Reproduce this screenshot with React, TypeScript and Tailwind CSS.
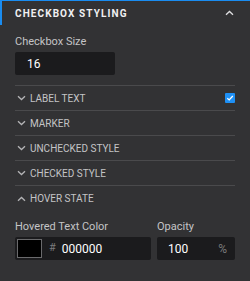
const ChevronDown = () => (
  <svg width="9" height="6" viewBox="0 0 9 6" className="shrink-0">
    <path d="M1 1.2 L4.5 4.5 L8 1.2" fill="none" stroke="#b4b4b6" strokeWidth="1.3" />
  </svg>
);

const ChevronUp = ({ color = "#b4b4b6" }: { color?: string }) => (
  <svg width="9" height="6" viewBox="0 0 9 6" className="shrink-0">
    <path d="M1 4.8 L4.5 1.5 L8 4.8" fill="none" stroke={color} strokeWidth="1.3" />
  </svg>
);

const sections = ["LABEL TEXT", "MARKER", "UNCHECKED STYLE", "CHECKED STYLE"];

export default function App() {
  return (
    <div
      className="w-[250px] h-[281px] bg-[#323234] text-[#d0d0d2] overflow-hidden"
      style={{ fontFamily: 'Roboto, "Noto Sans", sans-serif' }}
    >
      {/* header */}
      <div className="h-[25px] border-t border-l-2 border-[#1a8cf0] flex items-center justify-between pl-[13px] pr-[16px]">
        <span className="text-[10px] font-bold tracking-[1.1px] text-[#f0f0f2]">
          CHECKBOX STYLING
        </span>
        <ChevronUp color="#e0e0e2" />
      </div>

      <div className="px-[15px]">
        <div className="pt-[8px] text-[11px] leading-[18px] text-[#c4c4c6]">Checkbox Size</div>
        <div className="mt-[1px] w-[100px] h-[23px] bg-[#1b1b1d] rounded-[2px] flex items-center pl-[12px] text-[12px] text-white">
          16
        </div>

        <div className="mt-[10px] border-t border-[#4a4a4c]" />

        {sections.map((s, i) => (
          <div key={s} className="h-[25px] border-b border-[#4a4a4c] flex items-center">
            <div className="pl-[2px] w-[15px]">
              <ChevronDown />
            </div>
            <span className="text-[10px] text-[#c4c4c6] flex-1">{s}</span>
            {i === 0 && (
              <div className="w-[10px] h-[10px] bg-[#1e90f5] rounded-[1px] flex items-center justify-center">
                <svg width="8" height="8" viewBox="0 0 8 8">
                  <path d="M1.3 4.2 L3.2 5.9 L6.8 2" fill="none" stroke="white" strokeWidth="1.3" />
                </svg>
              </div>
            )}
          </div>
        ))}

        <div className="h-[25px] flex items-center">
          <div className="pl-[2px] w-[15px]">
            <ChevronUp />
          </div>
          <span className="text-[10px] text-[#c4c4c6]">HOVER STATE</span>
        </div>

        <div className="mt-[7px] flex gap-[6px]">
          <div className="w-[136px]">
            <div className="text-[11px] leading-[18px] text-[#c4c4c6]">Hovered Text Color</div>
            <div className="mt-[1px] h-[23px] bg-[#1b1b1d] rounded-[2px] flex items-center pl-[2px]">
              <div className="w-[25px] h-[19px] bg-black border border-[#6a6a6c]" />
              <span className="ml-[7px] text-[11px] text-[#7a7a7c]">#</span>
              <span className="ml-[6px] text-[12px] text-white">000000</span>
            </div>
          </div>
          <div className="w-[78px]">
            <div className="text-[11px] leading-[18px] text-[#c4c4c6]">Opacity</div>
            <div className="mt-[1px] h-[23px] bg-[#1b1b1d] rounded-[2px] flex items-center justify-between pl-[11px] pr-[8px]">
              <span className="text-[12px] text-white">100</span>
              <span className="text-[12px] text-[#7a7a7c]">%</span>
            </div>
          </div>
        </div>
      </div>
    </div>
  );
}
